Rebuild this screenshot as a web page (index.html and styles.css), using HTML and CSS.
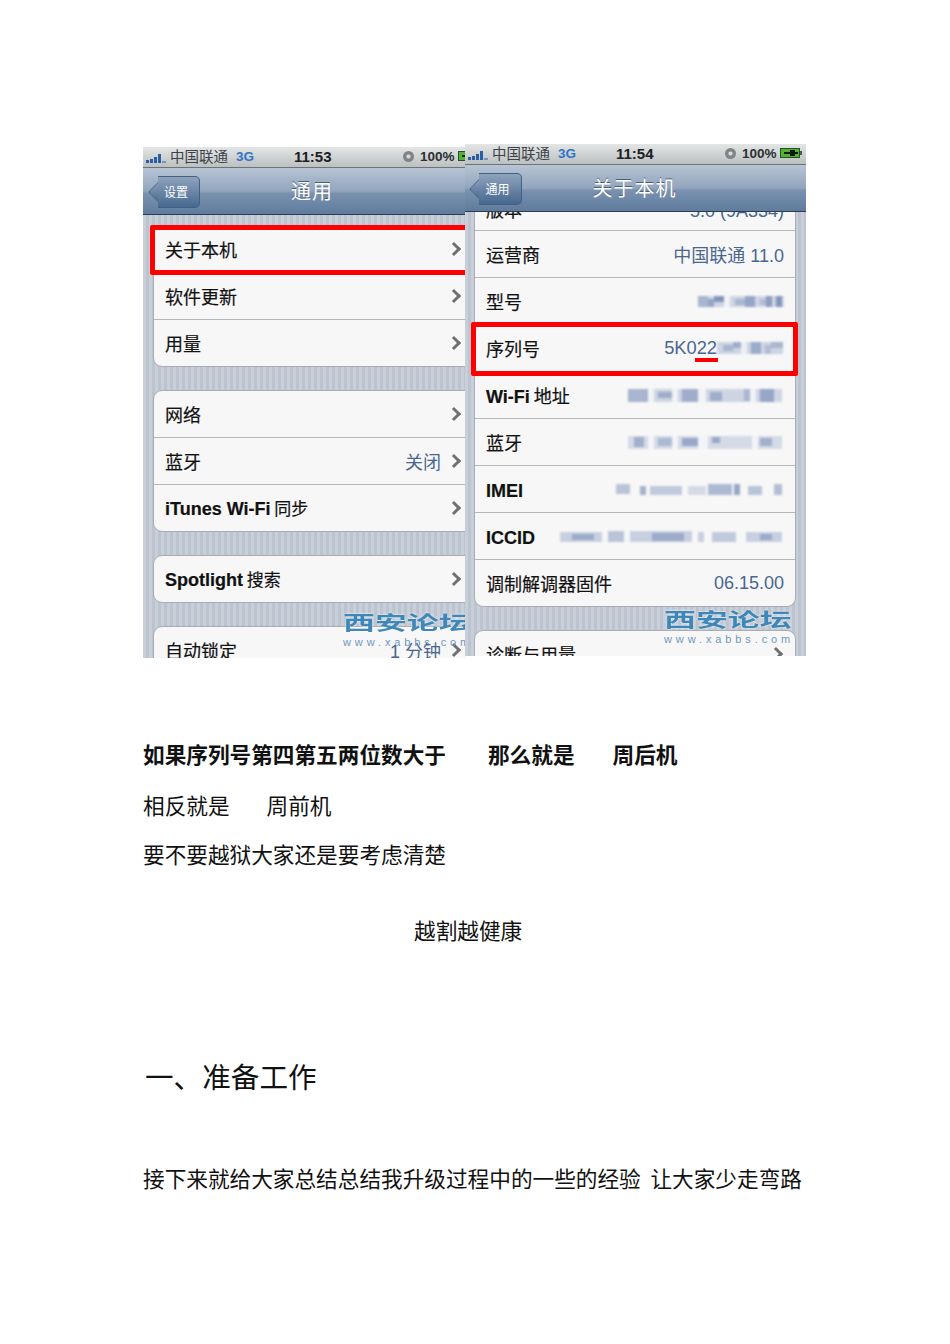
FILE: index.html
```html
<!DOCTYPE html>
<html lang="zh-CN">
<head>
  <meta charset="UTF-8">
  <title>序列号</title>
  <link rel="stylesheet" href="styles.css">
</head>
<body>

  <div class="shots">

    <!-- left phone -->
    <div class="phone phone-left">
      <div class="status">
        <svg class="signal" width="20" height="9" viewBox="0 0 20 9"><rect x="0" y="6" width="3" height="3"/><rect x="4" y="5" width="3" height="4"/><rect x="8" y="3" width="3" height="6"/><rect x="12" y="0" width="3" height="9"/><rect x="16" y="7" width="4" height="2" opacity=".5"/></svg>
        <span class="carrier">中国联通</span>
        <span class="net">3G</span>
        <span class="clock">11:53</span>
        <span class="alarm"></span>
        <span class="pct">100%</span>
        <svg class="batt" width="22" height="10" viewBox="0 0 22 10"><rect x=".5" y=".5" width="19" height="9" fill="#4fb52f" stroke="#2d4a2a"/><rect x="20" y="3" width="2" height="4" fill="#555"/><path d="M4 4h6V2l5 0v2h3v2h-3v2h-5V6H4z" fill="#0c1a0c"/></svg>
      </div>
      <div class="navbar">
        <span class="back">设置</span>
        <span class="title">通用</span>
      </div>
      <div class="table">
        <div class="group">
          <div class="row"><span class="name">关于本机</span><span class="arrow"></span></div>
          <div class="row"><span class="name">软件更新</span><span class="arrow"></span></div>
          <div class="row"><span class="name">用量</span><span class="arrow"></span></div>
        </div>
        <div class="group">
          <div class="row"><span class="name">网络</span><span class="arrow"></span></div>
          <div class="row"><span class="name">蓝牙</span><span class="val">关闭</span><span class="arrow"></span></div>
          <div class="row"><span class="name name-mix"><b>iTunes Wi-Fi</b> 同步</span><span class="arrow"></span></div>
        </div>
        <div class="group">
          <div class="row"><span class="name name-mix"><b>Spotlight</b> 搜索</span><span class="arrow"></span></div>
        </div>
        <div class="group">
          <div class="row"><span class="name">自动锁定</span><span class="val">1 分钟</span><span class="arrow"></span></div>
        </div>
      </div>
      <div class="redbox redbox-left"></div>
      <div class="mark"><div class="mark-cn">西安论坛</div><div class="mark-en">www.xabbs.com</div></div>
    </div>

    <!-- right phone -->
    <div class="phone phone-right">
      <div class="status">
        <svg class="signal" width="20" height="9" viewBox="0 0 20 9"><rect x="0" y="6" width="3" height="3"/><rect x="4" y="5" width="3" height="4"/><rect x="8" y="3" width="3" height="6"/><rect x="12" y="0" width="3" height="9"/><rect x="16" y="7" width="4" height="2" opacity=".5"/></svg>
        <span class="carrier">中国联通</span>
        <span class="net">3G</span>
        <span class="clock">11:54</span>
        <span class="alarm"></span>
        <span class="pct">100%</span>
        <svg class="batt" width="22" height="10" viewBox="0 0 22 10"><rect x=".5" y=".5" width="19" height="9" fill="#4fb52f" stroke="#2d4a2a"/><rect x="20" y="3" width="2" height="4" fill="#555"/><path d="M4 4h6V2l5 0v2h3v2h-3v2h-5V6H4z" fill="#0c1a0c"/></svg>
      </div>
      <div class="navbar">
        <span class="back">通用</span>
        <span class="title">关于本机</span>
      </div>
      <div class="table">
        <div class="group group-cut">
          <div class="row row-cut"><span class="name">版本</span><span class="val">5.0 (9A334)</span></div>
          <div class="row"><span class="name">运营商</span><span class="val">中国联通 11.0</span></div>
          <div class="row"><span class="name">型号</span>
            <svg class="mosaic" width="86" height="16" viewBox="0 0 86 16"><rect x="0" y="3" width="86" height="11" opacity=".3"/><rect x="0" y="3" width="10" height="11" opacity=".4"/><rect x="10" y="6" width="6" height="8" opacity=".6"/><rect x="16" y="3" width="10" height="6" opacity=".8"/><rect x="26" y="3" width="6" height="11" fill="#fff" opacity=".7"/><rect x="37" y="6" width="10" height="6" opacity=".4"/><rect x="47" y="3" width="10" height="11" opacity=".6"/><rect x="62" y="6" width="6" height="6" opacity=".3"/><rect x="68" y="3" width="6" height="11" opacity=".7"/><rect x="78" y="3" width="6" height="11" opacity=".8"/></svg>
          </div>
          <div class="row"><span class="name">序列号</span><span class="serial">5K022</span>
            <svg class="mosaic" width="67" height="16" viewBox="0 0 67 16"><rect x="0" y="2" width="66" height="12" opacity=".3"/><rect x="6" y="5" width="10" height="6" opacity=".4"/><rect x="16" y="2" width="8" height="6" opacity=".5"/><rect x="24" y="2" width="6" height="12" fill="#fff" opacity=".6"/><rect x="34" y="2" width="10" height="12" opacity=".55"/><rect x="48" y="5" width="6" height="9" opacity=".3"/><rect x="54" y="2" width="12" height="6" opacity=".4"/></svg>
          </div>
          <div class="row"><span class="name"><b>Wi-Fi</b> 地址</span>
            <svg class="mosaic" width="156" height="16" viewBox="0 0 156 16"><rect x="0" y="2" width="154" height="13" opacity=".3"/><rect x="0" y="2" width="20" height="13" opacity=".4"/><rect x="20" y="2" width="6" height="13" fill="#fff" opacity=".7"/><rect x="30" y="5" width="14" height="6" opacity=".5"/><rect x="44" y="2" width="6" height="13" fill="#fff" opacity=".7"/><rect x="54" y="2" width="16" height="13" opacity=".5"/><rect x="70" y="2" width="8" height="13" fill="#fff" opacity=".7"/><rect x="82" y="5" width="12" height="9" opacity=".5"/><rect x="116" y="2" width="6" height="12" opacity=".4"/><rect x="122" y="2" width="6" height="13" fill="#fff" opacity=".7"/><rect x="132" y="2" width="14" height="13" opacity=".6"/></svg>
          </div>
          <div class="row"><span class="name">蓝牙</span>
            <svg class="mosaic" width="156" height="16" viewBox="0 0 156 16"><rect x="0" y="2" width="154" height="13" opacity=".25"/><rect x="6" y="3" width="10" height="10" opacity=".5"/><rect x="20" y="2" width="6" height="13" fill="#fff" opacity=".7"/><rect x="30" y="4" width="14" height="8" opacity=".4"/><rect x="44" y="2" width="6" height="13" fill="#fff" opacity=".7"/><rect x="54" y="4" width="16" height="8" opacity=".6"/><rect x="70" y="2" width="10" height="13" fill="#fff" opacity=".7"/><rect x="84" y="3" width="8" height="6" opacity=".6"/><rect x="124" y="2" width="6" height="13" fill="#fff" opacity=".7"/><rect x="132" y="4" width="12" height="8" opacity=".5"/></svg>
          </div>
          <div class="row"><span class="name"><b>IMEI</b></span>
            <svg class="mosaic" width="168" height="16" viewBox="0 0 168 16"><rect x="0" y="3" width="14" height="10" opacity=".45"/><rect x="24" y="5" width="6" height="9" opacity=".6"/><rect x="34" y="5" width="32" height="9" opacity=".4"/><rect x="72" y="5" width="18" height="9" opacity=".25"/><rect x="92" y="3" width="24" height="11" opacity=".55"/><rect x="118" y="3" width="6" height="11" opacity=".7"/><rect x="132" y="5" width="14" height="9" opacity=".45"/><rect x="158" y="3" width="8" height="11" opacity=".5"/></svg>
          </div>
          <div class="row"><span class="name"><b>ICCID</b></span>
            <svg class="mosaic" width="224" height="16" viewBox="0 0 224 16"><rect x="0" y="4" width="42" height="10" opacity=".35"/><rect x="12" y="6" width="22" height="6" opacity=".5"/><rect x="48" y="3" width="16" height="11" opacity=".45"/><rect x="70" y="3" width="62" height="11" opacity=".35"/><rect x="92" y="5" width="32" height="8" opacity=".5"/><rect x="138" y="4" width="6" height="10" opacity=".35"/><rect x="152" y="4" width="24" height="10" opacity=".4"/><rect x="186" y="4" width="36" height="10" opacity=".35"/><rect x="200" y="6" width="12" height="6" opacity=".5"/></svg>
          </div>
          <div class="row"><span class="name">调制解调器固件</span><span class="val">06.15.00</span></div>
        </div>
        <div class="group">
          <div class="row"><span class="name">诊断与用量</span><span class="arrow"></span></div>
        </div>
      </div>
      <div class="redbox redbox-right"></div>
      <div class="underline"></div>
      <div class="mark"><div class="mark-cn">西安论坛</div><div class="mark-en">www.xabbs.com</div></div>
    </div>

  </div>

  <p class="line line-bold line-first">如果序列号第四第五两位数大于<span class="gap-a">那么就是</span><span class="gap-b">周后机</span></p>
  <p class="line line-second">相反就是<span class="gap-c">周前机</span></p>
  <p class="line line-third">要不要越狱大家还是要考虑清楚</p>
  <p class="line line-center">越割越健康</p>
  <h2 class="heading">一、准备工作</h2>
  <p class="line line-last">接下来就给大家总结总结我升级过程中的一些的经验&nbsp;&nbsp;让大家少走弯路</p>

</body>
</html>
```

FILE: styles.css
```css
body {
  margin: 0;
  padding: 144px 0 0 143px;
  background-color: #fff;
  font-family: "Noto Sans CJK SC", "Noto Sans", sans-serif;
  color: #111;
}

b {
  font-family: "Liberation Sans", sans-serif;
}

.shots {
  display: flex;
  align-items: flex-start;
}

.phone {
  position: relative;
  overflow: hidden;
  background: repeating-linear-gradient(90deg, #c8cfd8 0, #c8cfd8 3px, #bcc4cf 3px, #bcc4cf 6px);
  font-family: "Noto Sans CJK SC", sans-serif;
}

.phone-left {
  width: 322px;
  height: 511px;
  margin-top: 3px;
}

.phone-right {
  width: 341px;
  height: 512px;
}

/* status bar */
.status {
  display: flex;
  align-items: center;
  height: 18px;
  padding: 0 0 2px 3px;
  background: linear-gradient(#e4e6e6, #bcc0c0);
  border-bottom: 1px solid #6d7379;
  box-sizing: content-box;
  font-family: "Liberation Sans", sans-serif;
  font-size: 13.5px;
  font-weight: bold;
  color: #2b2f33;
  white-space: nowrap;
}

.signal {
  flex: none;
  fill: #2a5ea6;
  margin-top: 4px;
}

.carrier {
  flex: none;
  margin: 0 0 2px 4px;
  font-family: "Noto Sans CJK SC", sans-serif;
  font-weight: normal;
  font-size: 14.5px;
  color: #3c4248;
}

.net {
  flex: none;
  margin-left: 8px;
  width: 58px;
  color: #2f74c8;
}

.clock {
  flex: none;
  width: 109px;
  font-size: 15px;
  color: #1d2024;
}

.alarm {
  flex: none;
  width: 11px;
  height: 11px;
  margin-right: 6px;
  border-radius: 50%;
  background: radial-gradient(circle, #dcdcdc 0 1.5px, #808488 2.5px);
}

.pct {
  flex: none;
  width: 35px;
}

.batt {
  flex: none;
  margin-left: 3px;
}

/* nav bar */
.navbar {
  position: relative;
  z-index: 1;
  display: flex;
  align-items: center;
  justify-content: center;
  height: 47px;
  padding-bottom: 2px;
  background: linear-gradient(#b7c4d4 0, #92a5bd 50%, #7a92af 55%, #5f7b9d 100%);
  border-bottom: 1px solid #2d3d50;
  box-sizing: border-box;
}

.title {
  color: #fff;
  font-size: 20px;
  letter-spacing: 1px;
  text-shadow: 0 -1px 0 #4a5f78;
}

.phone-left .title {
  margin-left: 16px;
}

.phone-right .title {
  margin-left: -2px;
}

.back {
  position: absolute;
  left: 15px;
  top: 8px;
  width: 36px;
  height: 30px;
  line-height: 30px;
  padding-right: 5px;
  text-align: center;
  box-sizing: content-box;
  border: 1px solid #45607f;
  border-left: none;
  border-radius: 0 5px 5px 0;
  background: linear-gradient(#8ea3bd, #46688f);
  color: #fff;
  font-size: 12px;
}

.phone-right .back {
  left: 14px;
  width: 37px;
}

.back::before {
  content: "";
  position: absolute;
  left: -7px;
  top: 7px;
  width: 15px;
  height: 15px;
  transform: rotate(45deg);
  border-left: 1px solid #45607f;
  border-bottom: 1px solid #45607f;
  border-radius: 0 0 0 3px;
  background: linear-gradient(135deg, #8ea3bd, #46688f);
  z-index: -1;
}

.table {
  display: flex;
  flex-direction: column;
  gap: 23px;
}

.phone-left .table {
  padding: 10px 0 0 10px;
}

.phone-right .table {
  padding: 0 10px 0 9px;
}

/* table groups */
.group {
  background-color: #f7f7f7;
  border: 1px solid #a9adb2;
  border-radius: 9px;
  overflow: hidden;
}

.phone-left .group {
  width: 322px;
}

.group-cut {
  border-top: none;
  border-radius: 0 0 9px 9px;
}

.row {
  display: flex;
  align-items: center;
  height: 46px;
  padding: 0 11px;
  border-bottom: 1px solid #b4b7bb;
  font-size: 18px;
  -webkit-text-stroke: 0.2px #111;
  color: #111;
  white-space: nowrap;
}

.row:last-child {
  border-bottom: none;
}

.phone-left .row {
  width: 300px;
  box-sizing: content-box;
}

.row-cut {
  height: 18px;
  align-items: flex-end;
  overflow: hidden;
}

.row-cut .name,
.row-cut .val {
  margin-bottom: 8px;
}

.name {
  flex: 1;
}

.name-mix {
  margin-bottom: 2px;
  font-size: 17px;
}

.name b {
  font-size: 18px;
}

.val,
.serial {
  color: #4a668f;
  font-size: 18px;
  -webkit-text-stroke: 0;
  font-family: "Liberation Sans", "Noto Sans CJK SC", sans-serif;
}

.serial {
  font-size: 18.3px;
}

.phone-left .val {
  margin-right: 8px;
}

.arrow {
  flex: none;
  width: 7px;
  height: 7px;
  margin-right: 3px;
  border-top: 3px solid #6f7073;
  border-right: 3px solid #6f7073;
  transform: rotate(45deg);
}

.phone-left .arrow {
  margin-right: 6px;
}

.mosaic {
  flex: none;
  fill: #6f86b4;
  filter: blur(1.3px);
}

/* things drawn over the screenshots */
.redbox {
  position: absolute;
  border: 5px solid #f00;
  border-radius: 2px;
  box-sizing: border-box;
}

.redbox-left {
  left: 7px;
  top: 78px;
  width: 330px;
  height: 50px;
}

.redbox-right {
  left: 6px;
  top: 178px;
  width: 327px;
  height: 54px;
}

.underline {
  position: absolute;
  left: 230px;
  top: 214px;
  width: 23px;
  height: 4px;
  background-color: #f00;
}

.mark {
  position: absolute;
  right: 14px;
  bottom: 11px;
  width: 128px;
  color: #3f87b8;
}

.phone-left .mark {
  right: -6px;
  bottom: 10px;
}

.mark-cn {
  font-size: 21px;
  line-height: 24px;
  font-weight: 700;
  transform: scale(1.52, 0.92);
  transform-origin: left top;
  text-shadow: 0 0 2px #fff;
}

.mark-en {
  margin-top: 1px;
  font-size: 11px;
  line-height: 12px;
  letter-spacing: 3.9px;
  color: #6f97bd;
  font-family: "Liberation Sans", sans-serif;
}

/* document text */
.line {
  margin: 0;
  font-size: 21.65px;
  line-height: 30px;
  color: #111;
  white-space: nowrap;
}

.line-bold {
  font-weight: 700;
}

.line-first {
  margin-top: 81px;
}

.line-second {
  margin-top: 21px;
}

.line-third {
  margin-top: 19px;
}

.line-center {
  margin-top: 46px;
  padding-left: 271px;
}

.gap-a {
  margin-left: 42px;
}

.gap-b {
  margin-left: 38px;
}

.gap-c {
  margin-left: 37px;
}

.heading {
  margin: 111px 0 0 2px;
  font-size: 28.6px;
  line-height: 40px;
  font-weight: 400;
  color: #111;
}

.line-last {
  margin-top: 67px;
}
```
